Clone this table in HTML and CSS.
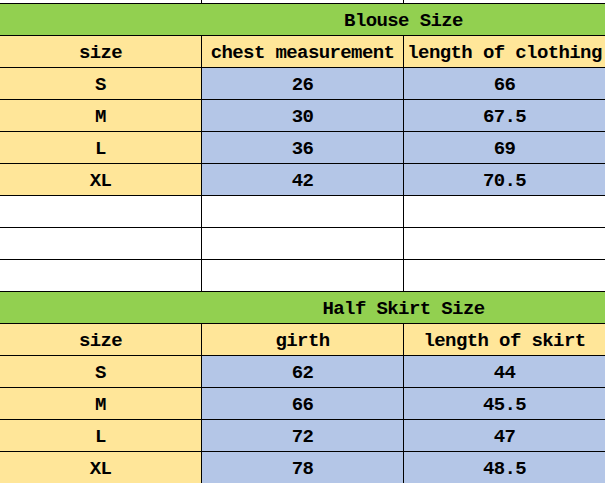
FILE: index.html
```html
<!DOCTYPE html>
<html>
<head>
<meta charset="utf-8">
<link rel="stylesheet" href="styles.css">
</head>
<body>
<div class="sheet">
  <div class="c w cap"></div><div class="c w cap"></div><div class="c w cap"></div><div class="c w cap"></div>
  <div class="c g span">Blouse Size</div>
  <div class="c y">size</div><div class="c y">chest measurement</div><div class="c y">length of clothing</div><div class="c w"></div>
  <div class="c y">S</div><div class="c b">26</div><div class="c b">66</div><div class="c w"></div>
  <div class="c y">M</div><div class="c b">30</div><div class="c b">67.5</div><div class="c w"></div>
  <div class="c y">L</div><div class="c b">36</div><div class="c b">69</div><div class="c w"></div>
  <div class="c y">XL</div><div class="c b">42</div><div class="c b">70.5</div><div class="c w"></div>
  <div class="c w"></div><div class="c w"></div><div class="c w"></div><div class="c w"></div>
  <div class="c w"></div><div class="c w"></div><div class="c w"></div><div class="c w"></div>
  <div class="c w"></div><div class="c w"></div><div class="c w"></div><div class="c w"></div>
  <div class="c g span">Half Skirt Size</div>
  <div class="c y">size</div><div class="c y">girth</div><div class="c y">length of skirt</div><div class="c w"></div>
  <div class="c y">S</div><div class="c b">62</div><div class="c b">44</div><div class="c w"></div>
  <div class="c y">M</div><div class="c b">66</div><div class="c b">45.5</div><div class="c w"></div>
  <div class="c y">L</div><div class="c b">72</div><div class="c b">47</div><div class="c w"></div>
  <div class="c y">XL</div><div class="c b">78</div><div class="c b">48.5</div><div class="c w"></div>
</div>
</body>
</html>
```
FILE: styles.css
```css
html, body {
  margin: 0;
  padding: 0;
  overflow: hidden;
  background: #ffffff;
}
.sheet {
  display: grid;
  grid-template-columns: repeat(4, 201px);
  grid-template-rows: 3px;
  grid-auto-rows: 31px;
  gap: 1px;
  width: 807px;
  background: #000000;
  font-family: "Liberation Mono", monospace;
  font-weight: bold;
  font-size: 19px;
  letter-spacing: -0.6px;
  color: #000000;
}
.c {
  display: flex;
  align-items: center;
  justify-content: center;
  white-space: nowrap;
  overflow: hidden;
  padding-top: 3px;
  box-sizing: border-box;
}
.cap {
  padding-top: 0;
}
.span {
  grid-column: 1 / -1;
}
.w { background: #ffffff; }
.g { background: #92d050; }
.y { background: #ffe699; }
.b { background: #b4c6e7; }
```
